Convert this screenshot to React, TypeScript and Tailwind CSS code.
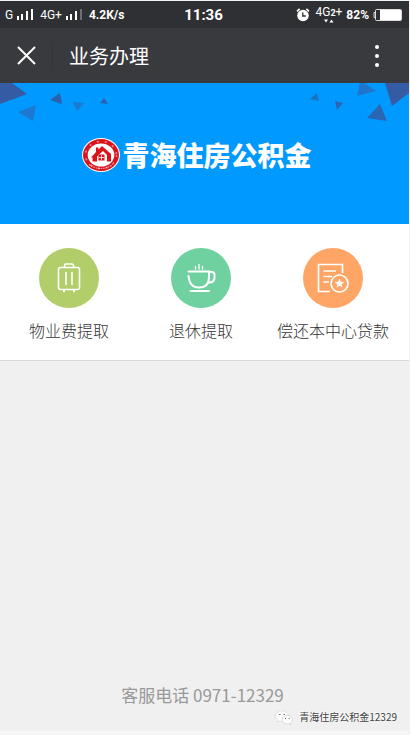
import type { ReactNode } from 'react';

interface Service {
  title: string;
  color: string;
  icon: ReactNode;
}

const services: Service[] = [
  { title: '物业费提取', color: 'bg-[#b2ce6a]', icon: <SuitcaseIcon /> },
  { title: '退休提取', color: 'bg-[#70d1a0]', icon: <CupIcon /> },
  { title: '偿还本中心贷款', color: 'bg-[#ffa566]', icon: <LoanIcon /> }
];

function SuitcaseIcon() {
  return (
    <svg viewBox="0 0 60 60" className="w-full h-full" fill="none" stroke="#fff" strokeWidth="1.6" strokeLinecap="round" aria-hidden="true">
      <rect x="19.500" y="19.500" width="21" height="22" rx="2" />
      <path d="M25.500 19v-1.500q0-1.500 1.500-1.500h6q1.500 0 1.500 1.500V19M27 24.500v12M33 24.500v12" />
      <path d="M25 42v1.500M35 42v1.500" strokeWidth="2" />
    </svg>
  );
}

function CupIcon() {
  return (
    <svg viewBox="0 0 60 60" className="w-full h-full" fill="none" stroke="#fff" strokeWidth="2" strokeLinecap="round" aria-hidden="true">
      <path d="M17.500 23.500H38V29q0 10.500-10 10.500-9.500 0-10.500-11.500" />
      <path d="M38 24h2.500q3 0 3 3v2.500q0 4-4 5H37M19.500 43H38" />
      <path d="M24.500 18.500V21M28 16.500V21M31.500 18.500V21" strokeWidth="1.300" />
    </svg>
  );
}

function LoanIcon() {
  return (
    <svg viewBox="0 0 60 60" className="w-full h-full" fill="none" stroke="#fff" strokeWidth="1.700" aria-hidden="true">
      <path d="M39.500 25V16.500h-24v27H27" />
      <path d="M20.500 23h12.500M20.500 28.500h8.500M20.500 34H26" />
      <circle cx="36.500" cy="35.500" r="8.500" />
      <path fill="#fff" stroke="none" d="M36.500 30.500l1.300 3.200 3.500.3-2.700 2.200.9 3.400-3-1.900-3 1.900.9-3.400-2.700-2.200 3.500-.3z" />
    </svg>
  );
}

function SignalIcon({ weak }: { weak?: boolean }) {
  return (
    <svg viewBox="0 0 17 13" className="w-[17px] h-[13px]" fill="#fff" aria-hidden="true">
      <rect x="0" y="8" width="2" height="4" />
      <rect x="4" y="6" width="2" height="6" />
      <rect x="9" y="3" width="2" height="9" />
      <rect x="14" y="1" width="2" height="11" opacity={weak ? 0.3 : 1} />
    </svg>
  );
}

function StatusBar() {
  return (
    <div className="flex items-center h-[27px] pl-[5px] pr-[7px] bg-[#2f3033] text-white font-['Roboto',sans-serif]">
      <div className="flex flex-1 items-center text-xs">
        <span>G</span>
        <span className="ml-1"><SignalIcon /></span>
        <span className="ml-1.5">4G+</span>
        <span className="ml-1"><SignalIcon weak /></span>
        <span className="ml-1.5 font-bold">4.2K/s</span>
      </div>
      <span className="text-[15px] leading-5 font-bold">11:36</span>
      <div className="flex flex-1 items-center justify-end">
        <svg viewBox="0 0 14 14" className="w-[14px] h-[14px]" aria-hidden="true">
          <circle cx="7" cy="7.500" r="5.800" fill="#fff" />
          <path d="M1 3.300L3.600.9M13 3.300L10.400.9" stroke="#fff" strokeWidth="1.600" />
          <path d="M6.800 4.500v3.500h3" fill="none" stroke="#2f3033" strokeWidth="1.300" />
        </svg>
        <div className="flex flex-col items-center ml-[5px]">
          <span className="text-xs leading-3">4G<span className="text-[9px] font-bold">2</span>+</span>
          <svg viewBox="0 0 10 4" className="w-[10px] h-1" fill="#fff" aria-hidden="true">
            <path d="M0 .5h4L2 3.500zM5.500 3.500h4l-2-3z" />
          </svg>
        </div>
        <span className="ml-1 text-xs font-bold">82%</span>
        <svg viewBox="0 0 29 12" className="w-[29px] h-3 ml-1" aria-hidden="true">
          <path d="M2.500 3.500H1v5h1.500" fill="none" stroke="#ddd" />
          <rect x="2.500" y=".5" width="26" height="11" rx="1" fill="none" stroke="#ddd" />
          <rect x="7" y="1" width="21" height="10" fill="#fff" />
        </svg>
      </div>
    </div>
  );
}

function TitleBar() {
  return (
    <header className="flex items-center h-[55px] pl-[17px] pr-[22px] bg-[#393a3e] text-white">
      <button type="button" aria-label="关闭" className="w-[19px] h-[19px]">
        <svg viewBox="0 0 19 19" fill="none" stroke="#fff" strokeWidth="2">
          <path d="M1 1l17 17M18 1L1 18" />
        </svg>
      </button>
      <div className="w-px h-7 mx-4 bg-[#333438]"></div>
      <h1 className="flex-1 text-xl font-normal">业务办理</h1>
      <button type="button" aria-label="更多" className="flex justify-center w-5">
        <svg viewBox="0 0 4 22" className="w-1 h-[22px]" fill="#fff">
          <circle cx="2" cy="2" r="2" />
          <circle cx="2" cy="11" r="2" />
          <circle cx="2" cy="20" r="2" />
        </svg>
      </button>
    </header>
  );
}

function Emblem() {
  return (
    <svg viewBox="0 0 38 34" className="w-[38px] h-[34px]" aria-hidden="true">
      <ellipse cx="19" cy="17" rx="19" ry="17" fill="#fff" />
      <ellipse cx="19" cy="17" rx="18" ry="16" fill="#d9141c" />
      <ellipse cx="19" cy="17" rx="15.500" ry="13.600" fill="none" stroke="#fff" strokeWidth="1.600" strokeDasharray="2 6" opacity=".5" />
      <path d="M7 26.500Q19 34.500 31 26.500" fill="none" stroke="#fff" strokeWidth="1.200" strokeDasharray="1.500 1" opacity=".6" />
      <ellipse cx="19" cy="17" rx="13.300" ry="11.600" fill="#fff" />
      <path fill="#d9141c" d="M9 19.500l5-5.500V9.500h2.500v2L20 8l9 8v7.500h-4V17l-4-4-6 5.500v5H10.500V19.500z" />
      <path fill="#d9141c" d="M16.500 16.500h6v6h-6z" />
      <path stroke="#fff" strokeWidth=".8" d="M17 19.500h5M19.500 17v5" />
    </svg>
  );
}

function Banner() {
  return (
    <section className="h-[141px] bg-[#0099ff]">
      <div className="flex justify-between h-[50px]">
        <svg viewBox="0 0 110 45" className="w-[110px] h-[45px]" fill="#2b61ae" aria-hidden="true">
          <path d="M0 0h12l15 11L0 21z" fill="#355ba5" />
          <path d="M18 29l18-7-3 16z" fill="#1c78d0" />
          <path d="M50 17l10-7 2 11z" />
          <path d="M73 19l11 1-7 8z" fill="#1c78d0" />
          <path d="M100 20l4-5 4 6z" />
        </svg>
        <svg viewBox="0 0 100 45" className="w-[100px] h-[45px]" fill="#2b66b5" aria-hidden="true">
          <path d="M1 16l7-6 2 8z" fill="#1c70c4" />
          <path d="M26 18l8 2-6 7z" />
          <path d="M51 0h4l12 8-19 5z" fill="#1f75cb" />
          <path d="M76 0h24v10L83 23z" fill="#355ba5" />
          <path d="M71 21L58 35l20 3z" />
        </svg>
      </div>
      <div className="flex items-center justify-center gap-[3px] pr-4">
        <Emblem />
        <span className="text-[27px] leading-[44px] font-black text-white">青海住房公积金</span>
      </div>
    </section>
  );
}

export default function App() {
  return (
    <div className="flex flex-col min-h-screen border-t border-r border-[#eef3f5] border-b-4 border-b-[#f6f6f6] bg-[#f0f0f0] font-['Noto_Sans_CJK_SC',sans-serif]">
      <StatusBar />
      <TitleBar />
      <Banner />
      <nav className="grid grid-cols-3 h-[137px] pt-6 pl-[3px] pr-[10px] bg-white border-b border-[#d9d9d9]">
        {services.map((service) => (
          <button key={service.title} type="button" className="flex flex-col items-center">
            <span className={`w-[60px] h-[60px] rounded-full ${service.color}`}>{service.icon}</span>
            <span className="mt-2.5 text-base font-light leading-6 text-[#333] whitespace-nowrap">{service.title}</span>
          </button>
        ))}
      </nav>
      <main className="flex-1"></main>
      <footer className="flex flex-col pb-1.5">
        <a href="tel:0971-12329" className="pr-1 mb-0.5 text-center text-[17px] leading-6 text-[#999]">
          客服电话 0971-12329
        </a>
        <div className="flex items-center self-end gap-1.5 pr-3">
          <svg viewBox="0 0 18 15" className="w-[18px] h-[15px]" aria-hidden="true">
            <path d="M7 1C3.200 1 .5 3.300.5 6.200c0 1.700.9 3 2.300 4L2.300 12l2.200-1c.8.2 1.600.4 2.500.4 3.800 0 6.500-2.300 6.500-5.200S10.800 1 7 1z" fill="#fff" stroke="#ccc" strokeWidth=".5" />
            <path d="M12.300 5.500c-3 0-5.200 1.900-5.200 4.200s2.200 4.200 5.200 4.200c.6 0 1.200-.1 1.800-.3l1.700.9-.4-1.500c1.300-.8 2.100-2 2.100-3.300 0-2.300-2.200-4.200-5.200-4.200z" fill="#fff" stroke="#bbb" strokeWidth=".5" />
            <path d="M4.200 4.500h1.300M8.500 4.500h1.300M10 8.500h1M13.700 8.500h1" stroke="#555" strokeWidth="1" />
          </svg>
          <span className="text-[10px] leading-4 text-[#444] [text-shadow:-1px_-1px_0_#fff]">青海住房公积金12329</span>
        </div>
      </footer>
    </div>
  );
}
